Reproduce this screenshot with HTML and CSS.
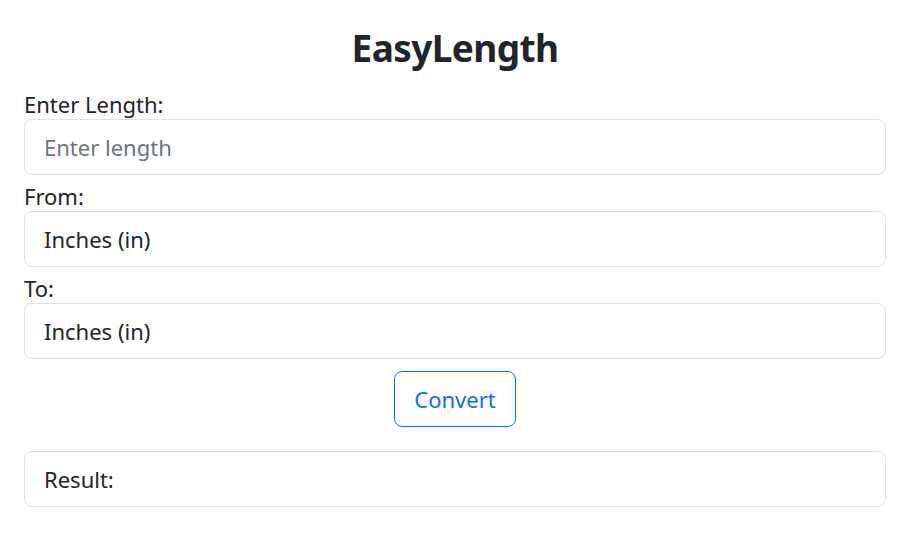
FILE: index.html
```html
<!DOCTYPE html>
<html lang="en">
<head>
<meta charset="utf-8">
<title>EasyLength</title>
<link rel="stylesheet" href="styles.css">
</head>
<body>
<main class="app">
  <h1 class="title">EasyLength</h1>
  <div class="field">
    <label class="label" for="len">Enter Length:</label>
    <input class="control" id="len" type="text" placeholder="Enter length">
  </div>
  <div class="field">
    <label class="label" for="from">From:</label>
    <div class="control select">Inches (in)</div>
  </div>
  <div class="field">
    <label class="label" for="to">To:</label>
    <div class="control select">Inches (in)</div>
  </div>
  <div class="actions">
    <button class="btn" type="button">Convert</button>
  </div>
  <div class="control result">Result:</div>
</main>
</body>
</html>
```
FILE: styles.css
```css
* { box-sizing: border-box; }
html, body { margin: 0; padding: 0; background: #fff; }
body {
  font-family: "Noto Sans", "Open Sans", sans-serif;
  color: #212529;
  font-size: 22px;
}
.app {
  padding: 24px 23px 0 24px;
  display: flex;
  flex-direction: column;
}
.title {
  margin: 0 0 17px;
  text-align: center;
  font-size: 37px;
  letter-spacing: -0.6px;
  font-weight: 700;
  line-height: 48px;
  height: 48px;
}
.field {
  display: flex;
  flex-direction: column;
  margin-bottom: 6px;
}
.label {
  line-height: 30px;
  height: 30px;
  font-size: 22px;
}
.control {
  display: flex;
  align-items: center;
  width: 100%;
  height: 56px;
  padding: 0 19px;
  border: 1px solid #dee2e6;
  border-radius: 8px;
  font: inherit;
  font-size: 22px;
  color: #212529;
  background: #fff;
  outline: none;
}
.control::placeholder { color: #6c757d; opacity: 1; }
.actions {
  display: flex;
  justify-content: center;
  margin-top: 6px;
  margin-bottom: 24px;
}
.btn {
  width: 122px;
  height: 56px;
  border: 1px solid #0d6efd;
  border-radius: 8px;
  background: #fff;
  color: #0d6efd;
  font: inherit;
  font-size: 22px;
  padding: 0;
}
```
